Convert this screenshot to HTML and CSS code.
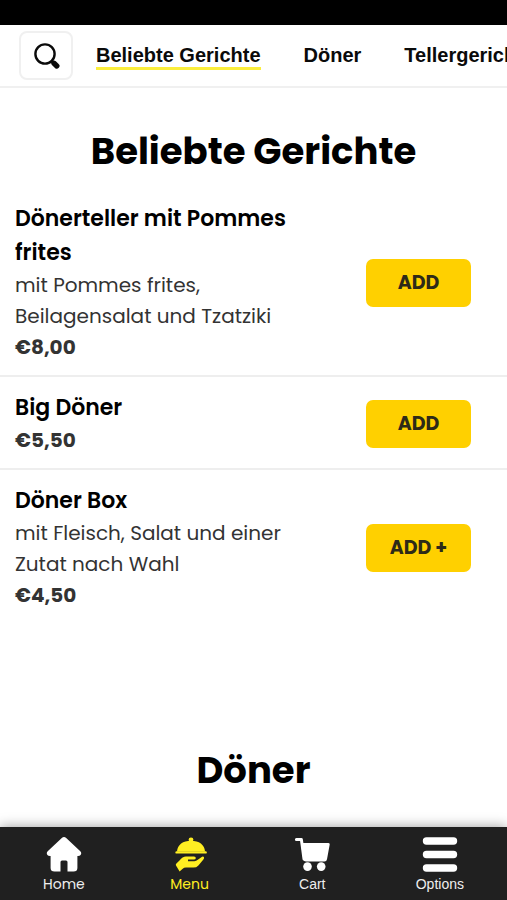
FILE: index.html
```html
<!DOCTYPE html>
<html lang="de">
<head>
    <meta charset="UTF-8">
    <meta name="viewport" content="width=device-width, initial-scale=1.0">
    <title>Speisekarte</title>
    <link rel="stylesheet" href="styles.css">
</head>
<body>
    <div class="status-bar"></div>

    <header class="top-nav">
        <button class="search-btn" aria-label="Suche">
            <svg width="28" height="28" viewBox="0 0 28 28">
                <circle cx="13" cy="12" r="9.6" fill="none" stroke="#0a0a0a" stroke-width="2.4"/>
                <path d="M19 18.5l3 3" stroke="#0a0a0a" stroke-width="2.6"/>
                <path d="M22 21.3l2.8 2.6" stroke="#0a0a0a" stroke-width="5.4" stroke-linecap="round"/>
            </svg>
        </button>
        <nav class="categories">
            <a href="#beliebt" class="active">Beliebte Gerichte</a>
            <a href="#doener">Döner</a>
            <a href="#teller">Tellergerichte</a>
        </nav>
    </header>

    <main class="menu">
        <section id="beliebt">
            <h2>Beliebte Gerichte</h2>

            <div class="item">
                <div class="info">
                    <h3>Dönerteller mit Pommes frites</h3>
                    <p>mit Pommes frites, Beilagensalat und Tzatziki</p>
                    <p class="price">€8,00</p>
                </div>
                <button class="add-btn">ADD</button>
            </div>

            <div class="item">
                <div class="info">
                    <h3>Big Döner</h3>
                    <p class="price">€5,50</p>
                </div>
                <button class="add-btn">ADD</button>
            </div>

            <div class="item">
                <div class="info">
                    <h3>Döner Box</h3>
                    <p>mit Fleisch, Salat und einer Zutat nach Wahl</p>
                    <p class="price">€4,50</p>
                </div>
                <button class="add-btn">ADD +</button>
            </div>
        </section>

        <section id="doener">
            <h2>Döner</h2>
        </section>
    </main>

    <nav class="tab-bar">
        <a href="#home">
            <svg width="36" height="36" viewBox="0 0 36 36">
                <path d="M15.8 1Q18 -.8 20.2 1L34.3 14.2Q36 16 34.6 18Q33.6 19.2 31.4 19V31Q31.4 34.5 27.5 34.5H21.5V25Q21.5 23.5 20 23.5H16Q14.5 23.5 14.5 25V34.5H8.5Q4.6 34.5 4.6 31V19Q2.4 19.2 1.4 18Q0 16 1.7 14.2Z" fill="#fff"/>
            </svg>
            <span>Home</span>
        </a>
        <a href="#menu" class="active">
            <svg width="36" height="36" viewBox="0 0 36 36">
                <circle cx="19" cy="2.8" r="2.4" fill="#ffee22"/>
                <path d="M5 14.6C5.3 7.8 11 3.8 19 3.8S32.7 7.8 33 14.6Z" fill="#ffee22"/>
                <path d="M4.6 15.4H33.6" stroke="#ffee22" stroke-width="2.4" stroke-linecap="round"/>
                <path d="M4 28.6Q3.4 27.4 4.4 26.4L7.5 23.4Q10.5 19.4 14 19.4H22Q24 19.6 23.8 21.2Q23.6 22.6 21.8 22.6H16V24.2H22.4Q24.2 24.2 25.8 22.8L29 20.4Q31.2 18.8 32 20.2Q32.4 21.2 31.2 22.8L26.4 28.4Q24.4 30.6 21.4 30.6H14Q12 30.6 10.4 32L7.6 34.4Z" fill="#ffee22"/>
            </svg>
            <span>Menu</span>
        </a>
        <a href="#cart" class="plain">
            <svg width="36" height="36" viewBox="0 0 36 36">
                <path d="M2.4 2.6H7.4L10 22" fill="none" stroke="#fff" stroke-width="3" stroke-linecap="round" stroke-linejoin="round"/>
                <path d="M8 6H34.5Q36 6 35.7 7.6L33 22.2Q32.6 24.4 30.5 24.4H12Q9.6 24.4 9.2 22.2L7 6Z" fill="#fff"/>
                <circle cx="13.5" cy="29.6" r="4.3" fill="#fff"/>
                <circle cx="27.2" cy="29.6" r="4.3" fill="#fff"/>
            </svg>
            <span>Cart</span>
        </a>
        <a href="#options" class="plain">
            <svg width="36" height="36" viewBox="0 0 36 36">
                <path d="M4.5 4H31.5M4.5 17.5H31.5M4.5 31H31.5" stroke="#fff" stroke-width="7.4" stroke-linecap="round"/>
            </svg>
            <span>Options</span>
        </a>
    </nav>
</body>
</html>
```
FILE: styles.css
```css
* {
    box-sizing: border-box;
}

body {
    display: flex;
    flex-direction: column;
    height: 100vh;
    margin: 0;
    overflow: hidden;
    background-color: #fff;
    font-family: Poppins, Inter, sans-serif;
}

h2, h3, p {
    margin: 0;
}

a {
    text-decoration: none;
}

button {
    font-family: inherit;
    cursor: pointer;
}

.status-bar {
    flex: none;
    height: 25px;
    background-color: #000;
}

.top-nav {
    display: flex;
    flex: none;
    align-items: center;
    gap: 23px;
    padding: 6px 0 6px 19px;
    border-bottom: 2px solid #f0f0f0;
    overflow: hidden;
}

.search-btn {
    display: flex;
    flex: none;
    align-items: center;
    justify-content: center;
    width: 54px;
    height: 49px;
    padding: 0;
    border: 2px solid #f0f0f0;
    border-radius: 8px;
    background-color: #fff;
}

.categories {
    display: flex;
    gap: 43px;
    padding-top: 1px;
    font-family: "Liberation Sans", Arial, sans-serif;
    font-size: 20px;
    font-weight: bold;
    line-height: 24px;
    white-space: nowrap;
}

.categories a {
    color: #0a0a0a;
    border-bottom: 3px solid transparent;
}

.categories a.active {
    border-bottom-color: #fbee3c;
}

/* menu list */
.menu {
    flex: 1;
    min-height: 0;
    overflow: hidden;
}

.menu section {
    padding: 34px 0 84px;
}

.menu h2 {
    margin-bottom: 8px;
    font-size: 37px;
    font-weight: 700;
    line-height: 58px;
    text-align: center;
}

.item {
    display: flex;
    align-items: center;
    justify-content: space-between;
    padding: 14px 36px 12px 15px;
    border-bottom: 2px solid #eee;
}

.item:last-child {
    border-bottom: none;
}

.info {
    width: 280px;
    color: #333;
    font-size: 20px;
    line-height: 31px;
}

.info h3 {
    color: #000;
    font-size: 22px;
    font-weight: 600;
    line-height: 34px;
}

.info .price {
    font-weight: 700;
}

.add-btn {
    width: 105px;
    height: 48px;
    padding: 0;
    border: none;
    border-radius: 7px;
    background-color: #ffd000;
    color: #2e2a18;
    font-size: 19px;
    font-weight: 700;
}

/* bottom tabs */
.tab-bar {
    display: flex;
    flex: none;
    justify-content: space-between;
    padding: 10px 43px 5px;
    background-color: #202020;
    box-shadow: 0 0 12px rgba(0, 0, 0, 0.4);
    font-size: 14px;
    line-height: 22px;
}

.tab-bar a {
    display: flex;
    flex-direction: column;
    align-items: center;
    color: #eee;
}

.tab-bar a.active {
    color: #ffee22;
}

.tab-bar a.plain {
    font-family: "Liberation Sans", Arial, sans-serif;
}
```
